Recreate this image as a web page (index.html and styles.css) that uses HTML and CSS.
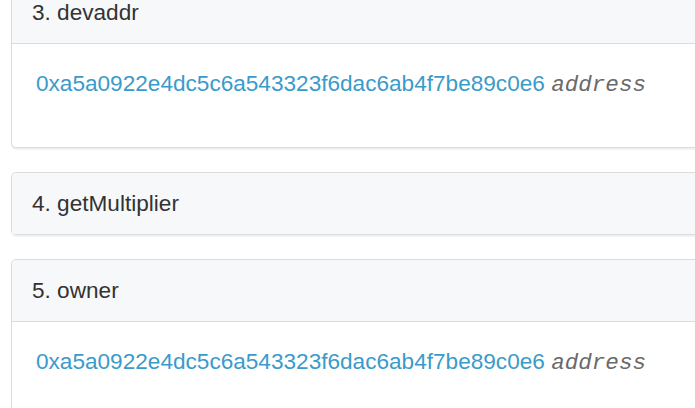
FILE: index.html
```html
<!DOCTYPE html>
<html>
<head>
<meta charset="utf-8">
<link rel="stylesheet" href="styles.css">
</head>
<body>
<div class="list">
  <div class="panel">
    <div class="panel-heading">3. devaddr</div>
    <div class="panel-body"><a class="addr" href="#">0xa5a0922e4dc5c6a543323f6dac6ab4f7be89c0e6</a> <i class="type">address</i></div>
  </div>
  <div class="panel">
    <div class="panel-heading">4. getMultiplier</div>
  </div>
  <div class="panel">
    <div class="panel-heading">5. owner</div>
    <div class="panel-body"><a class="addr" href="#">0xa5a0922e4dc5c6a543323f6dac6ab4f7be89c0e6</a> <i class="type">address</i></div>
  </div>
</div>
</body>
</html>
```
FILE: styles.css
```css
html, body {
  margin: 0;
  padding: 0;
  background: #ffffff;
  overflow: hidden;
}
body {
  font-family: "Liberation Sans", Arial, sans-serif;
  font-size: 22.6px;
  line-height: 31px;
  color: #333333;
}
.list {
  margin-top: -19px;
  padding-left: 11px;
  width: 700px;
  display: flex;
  flex-direction: column;
  gap: 24px;
}
.panel {
  border: 1px solid #dcdcdc;
  border-radius: 5px;
  background: #ffffff;
  box-shadow: 0 2px 1px rgba(0, 0, 0, 0.06);
}
.panel-heading {
  background: #f7f8f9;
  padding: 15px 20px;
  border-radius: 5px 5px 0 0;
}
.panel-body {
  border-top: 1px solid #dcdcdc;
  padding: 24px 24px 46px;
  white-space: nowrap;
}
.addr {
  color: #3a9bcb;
  text-decoration: none;
}
.type {
  font-family: "Liberation Mono", "DejaVu Sans Mono", monospace;
  font-size: 22.6px;
  color: #6a6a6a;
}
```
